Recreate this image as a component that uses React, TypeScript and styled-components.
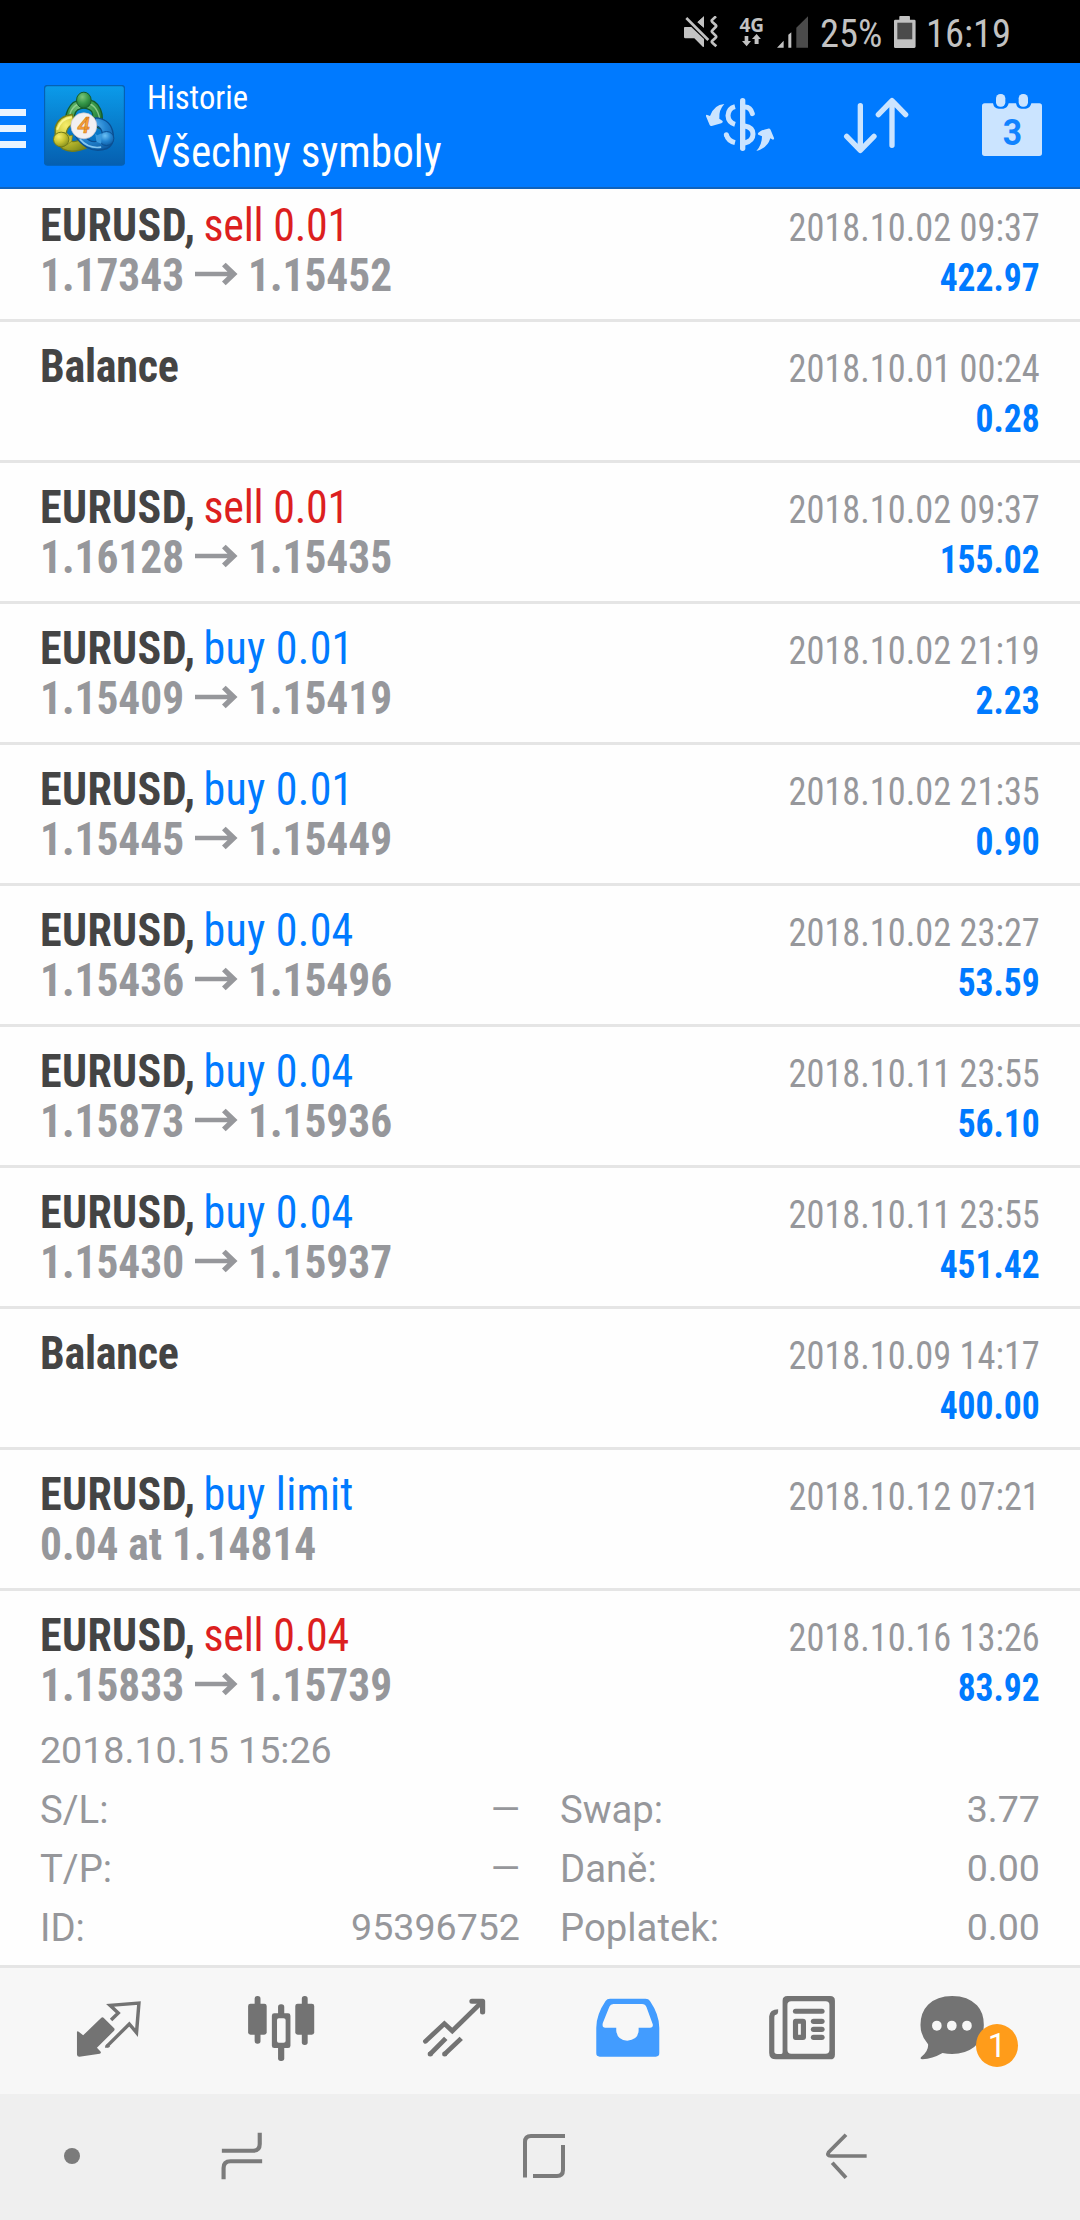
import React from "react";
import styled, { createGlobalStyle } from "styled-components";

const condensed = '"Roboto Condensed", Roboto, sans-serif';
const regular = "Roboto, sans-serif";

const GlobalStyle = createGlobalStyle`
  *, *::before, *::after { box-sizing: border-box; }
  body { margin: 0; background: #fff; }
  svg { display: block; flex: none; }
`;

const Screen = styled.div`
  display: flex;
  flex-direction: column;
  width: 1080px;
  height: 2220px;
  overflow: hidden;
  background: #fefefe;
  font-family: ${condensed};
`;

/* ---------- status bar ---------- */

const StatusBar = styled.div`
  display: flex;
  flex: none;
  align-items: center;
  justify-content: flex-end;
  height: 63px;
  padding-right: 69px;
  background: #000;
  color: #c2c2c2;
  gap: 12px;
`;

const StatusText = styled.span`
  font-size: 38.5px;
  line-height: 63px;
  padding-top: 3px;
`;

const NetworkBlock = styled.div`
  display: flex;
  flex-direction: column;
  align-items: center;
  width: 26px;
  margin-left: 9px;
`;

const NetworkLabel = styled.span`
  font: 700 19px/18px "Noto Sans", sans-serif;
`;

const BatterySlot = styled.div`
  margin-right: -2px;
`;

/* ---------- header ---------- */

const Header = styled.header`
  display: flex;
  flex: none;
  height: 126px;
  align-items: center;
  background: #007aff;
  border-bottom: 2px solid #0f63bd;
  color: #fff;
`;

const Burger = styled.div`
  display: flex;
  flex-direction: column;
  gap: 9px;
  width: 26px;
  margin: 6px 18px 0 0;
`;

const BurgerLine = styled.span`
  height: 7px;
  background: #e9f4ff;
`;

const Titles = styled.div`
  align-self: flex-start;
  flex: 1;
  padding: 9px 0 0 22px;
`;

const Subtitle = styled.div`
  font-size: 34px;
  line-height: 50px;
  transform: scaleX(0.96);
  transform-origin: left;
`;

const Title = styled.div`
  font-size: 44px;
  line-height: 60px;
  white-space: nowrap;
  transform: scaleX(0.981);
  transform-origin: left;
`;

const HeaderAction = styled.div`
  display: flex;
  flex: none;
  justify-content: center;
  width: 136px;
`;

/* ---------- history list ---------- */

const ListViewport = styled.main`
  flex: none;
  height: 1779px;
  overflow: hidden;
`;

const List = styled.div`
  margin-top: -8px;
`;

const Deal = styled.section<{ $open?: boolean }>`
  height: ${(p) => (p.$open ? 377 : 141)}px;
  border-bottom: 3px solid #e5e5e5;
  padding: 0 40px;
`;

const DealHead = styled.div`
  display: flex;
  justify-content: space-between;
  height: 119px;
`;

const DealMain = styled.div`
  padding-top: 19px;
`;

const DealSide = styled.div`
  padding-top: 22px;
  text-align: right;
`;

const DealTitle = styled.div`
  font-size: 46px;
  line-height: 50px;
  white-space: nowrap;
  color: #444;
  transform: scaleX(0.957);
  transform-origin: left;
`;

const Symbol = styled.b`
  font-weight: 700;
  letter-spacing: 0.35px;
  margin-right: -2.5px;
`;

const BalanceLabel = styled.b`
  font-weight: 700;
  letter-spacing: -0.25px;
`;

const Side = styled.span<{ $kind: "sell" | "buy" }>`
  color: ${(p) => (p.$kind === "sell" ? "#dc1f1f" : "#007aff")};
  letter-spacing: ${(p) => (p.$kind === "sell" ? -0.25 : 0.25)}px;
`;

const Prices = styled.div`
  display: flex;
  align-items: center;
  height: 50px;
  color: #96979b;
`;

const Price = styled.span<{ $width?: number }>`
  width: ${(p) => (p.$width ? p.$width + "px" : "auto")};
  font-size: 46px;
  font-weight: 700;
  line-height: 50px;
  white-space: nowrap;
  transform: scaleX(0.943);
  transform-origin: left;
`;

const ArrowSlot = styled.div`
  padding-bottom: 3px;
`;

const DealTime = styled.div`
  font-size: 38.3px;
  line-height: 50px;
  color: #96979b;
  transform: scaleX(0.949);
  transform-origin: right;
`;

const Profit = styled.div`
  font-size: 38.3px;
  font-weight: 700;
  line-height: 50px;
  color: #007aff;
  transform: scaleX(0.928);
  transform-origin: right;
`;

const Details = styled.div`
  display: grid;
  grid-template-columns: 1fr 1fr;
  column-gap: 40px;
  grid-auto-rows: 59px;
  margin-top: 11px;
  font-family: ${regular};
  font-size: 37.6px;
  line-height: 59px;
  color: #96979b;
`;

const OpenTime = styled.div`
  grid-column: 1 / -1;
`;

const Field = styled.div`
  display: flex;
  justify-content: space-between;
`;

const FieldLabel = styled.span`
  font-size: 38.3px;
`;

/* ---------- bottom bars ---------- */

const TabBar = styled.nav`
  display: flex;
  flex: none;
  align-items: center;
  height: 126px;
  padding-left: 22px;
  background: #f7f7f7;
`;

const Tab = styled.div`
  display: flex;
  flex: none;
  justify-content: center;
  width: 173px;
`;

const ChatTab = styled.div`
  position: relative;
  flex: none;
  margin-left: 30px;
`;

const Badge = styled.span`
  position: absolute;
  left: 59px;
  top: 29.5px;
  width: 42px;
  height: 43px;
  border-radius: 50%;
  background: #ff9c1a;
  color: #fff;
  font: 400 33px/43px Roboto, sans-serif;
  text-align: center;
`;

const SystemBar = styled.div`
  display: flex;
  flex: none;
  align-items: center;
  height: 126px;
  background: #efefef;
`;

const Dot = styled.span`
  width: 16px;
  height: 16px;
  margin: 0 10.5px 2px 64px;
  border-radius: 50%;
  background: #7b7b7b;
`;

const SystemKey = styled.div`
  display: flex;
  flex: none;
  justify-content: center;
  width: 302px;
`;

/* ---------- icons ---------- */

const HeaderIcon = ({ x, children }: { x: number; children: React.ReactNode }) => (
  <svg width="70" height="70" viewBox={`${x} 270 210 210`} fill="#cbe4ff" stroke="none">
    {children}
  </svg>
);

const TabIcon = ({ x, color = "#737373", children }: { x: number; color?: string; children: React.ReactNode }) => (
  <svg width="70" height="73.3" viewBox={`${x} 103 203.3 220`} preserveAspectRatio="none" fill={color} color={color}>
    {children}
  </svg>
);

const MuteIcon = () => (
  <svg width="34" height="32" viewBox="69 47 102 96" fill="#c2c2c2">
    <path d="M129 48V82L109 66ZM71 80h20l38 36v23l-3 1-26-26H73q-4 0-4-4V84q0-4 2-4z" />
    <path d="M76 53L143 120" fill="none" stroke="#000" strokeWidth="17" transform="translate(5 -5)" />
    <path d="M129 48V82L109 66Z" />
    <path d="M76 53L142 119" fill="none" stroke="#c2c2c2" strokeWidth="8" />
    <path d="M165 48l-12 11q-2 3 1 6l10 9q3 3 0 6l-10 10q-3 3 0 6l10 10q3 3 0 6l-10 9q-3 3 0 6l12 11" fill="none" stroke="#c2c2c2" strokeWidth="8" />
  </svg>
);

const DataArrows = () => (
  <svg width="18.6" height="12.3" viewBox="243 107 56 37" fill="#c2c2c2">
    <path d="M251 113h11v15h8l-13 16-14-16h8zM281 137h12v-15h7l-13-15-14 15h8z" />
  </svg>
);

const SignalIcon = () => (
  <svg width="31.3" height="32" viewBox="347 47 94 96">
    <path d="M367 121v21h-20zM381 103l9-7v46h-9z" fill="#c2c2c2" />
    <path d="M405 82l36-35v95h-36z" fill="#4b4b4b" />
  </svg>
);

const BatteryIcon = () => (
  <svg width="21.6" height="32" viewBox="698 47 65 96">
    <path d="M716 47h28q2 0 2 3v8h13q4 0 4 4v77q0 4-4 4h-57q-4 0-4-4V62q0-4 4-4h12v-8q0-3 2-3z" fill="#c2c2c2" />
    <path d="M708 67h45v50h-45z" fill="#4b4b4b" />
  </svg>
);

const Logo = () => (
  <svg width="81" height="81" viewBox="22.500 23.500 243 243">
    <defs>
      <linearGradient id="tile" x1="0" y1="0" x2="0" y2="1">
        <stop offset="0" stopColor="#0b9bea" />
        <stop offset="0.5" stopColor="#087dcc" />
        <stop offset="1" stopColor="#055fb0" />
      </linearGradient>
      <radialGradient id="green" cx="0.4" cy="0.3" r="0.8">
        <stop offset="0" stopColor="#7cc67a" />
        <stop offset="0.5" stopColor="#37994a" />
        <stop offset="1" stopColor="#17642a" />
      </radialGradient>
      <radialGradient id="yellow" cx="0.35" cy="0.3" r="0.8">
        <stop offset="0" stopColor="#f7ee6c" />
        <stop offset="0.5" stopColor="#c9c432" />
        <stop offset="1" stopColor="#7f8a1c" />
      </radialGradient>
      <radialGradient id="blue" cx="0.4" cy="0.3" r="0.8">
        <stop offset="0" stopColor="#6dc1f5" />
        <stop offset="0.5" stopColor="#2384d0" />
        <stop offset="1" stopColor="#0b559c" />
      </radialGradient>
    </defs>
    <rect x="24" y="25" width="240" height="239" rx="9" fill="url(#tile)" stroke="#0561b4" strokeWidth="4" />
    <path d="M94 150Q82 122 94 98Q108 68 142 66Q180 66 192 96Q204 124 190 154L164 140Q176 106 160 98Q142 88 124 98Q108 110 118 136Z" fill="url(#green)" stroke="#145c2d" strokeWidth="4" />
    <path d="M98 128Q100 82 142 76Q182 78 190 128" fill="none" stroke="#a9dca4" strokeWidth="4" opacity=".7" />
    <path d="M108 112Q66 116 56 152Q52 196 80 216Q108 230 150 212L136 184Q108 202 96 186Q84 170 94 154Q102 142 114 140Z" fill="url(#yellow)" stroke="#737d1a" strokeWidth="4" />
    <path d="M106 120Q72 124 62 158" fill="none" stroke="#fffba0" strokeWidth="6" opacity=".8" />
    <path d="M176 122Q218 124 228 160Q238 200 212 214Q178 226 150 210Q128 196 118 178L144 176Q160 198 184 192Q202 182 196 162Q190 146 176 146Z" fill="url(#blue)" stroke="#0b4f92" strokeWidth="4" />
    <path d="M130 186Q156 216 194 210" fill="none" stroke="#9fdcff" strokeWidth="5" opacity=".8" />
    <ellipse cx="142" cy="69" rx="22" ry="24" fill="url(#green)" stroke="#145c2d" strokeWidth="3" />
    <path d="M80 166q14 0 18 10l10-2-2 18q-14 14-26 14z" fill="#c4be34" stroke="#737d1a" strokeWidth="2" />
    <ellipse cx="74" cy="187" rx="23" ry="22" fill="url(#yellow)" stroke="#737d1a" strokeWidth="3" />
    <ellipse cx="210" cy="184" rx="22" ry="21" fill="url(#blue)" stroke="#0b4f92" strokeWidth="3" />
    <path d="M196 168l-14 6-6-4 4 24 14 6z" fill="#3b9ade" />
    <circle cx="142" cy="146" r="39" fill="#f1f0f2" stroke="#c5c3cc" strokeWidth="2" />
    <text x="142" y="169" textAnchor="middle" fontFamily="Roboto, sans-serif" fontWeight="500" fontStyle="italic" fontSize="68" fill="#f9a63a" stroke="#d67a1c" strokeWidth="2">4</text>
  </svg>
);

const CurrencyIcon = () => (
  <HeaderIcon x={135}>
    <rect x="240" y="294" width="16" height="159" rx="8" />
    <g fill="none" stroke="#cbe4ff" strokeWidth="15">
      <path d="M225 320Q205 325 204 347Q205 367 225 373" />
      <path d="M255 321Q272 321 277 341" strokeLinecap="round" />
      <path d="M254 378Q279 382 279 402Q279 423 254 429" />
      <path d="M199 404Q204 423 225 428" />
    </g>
    <circle cx="199" cy="404" r="7.500" />
    <path d="M193 312Q162 314 150 348L140 344Q137 345 138 349L149 375Q151 379 155 378L184 370Q190 367 188 363L178 356Q176 330 193 312z" />
    <path d="M289 453Q306 435 306 409L295 404Q292 402 295 398Q308 388 324 386Q330 385 332 390L342 414Q343 419 339 419L331 415Q322 445 289 453z" />
  </HeaderIcon>
);

const SortIcon = () => (
  <HeaderIcon x={543}>
    <g fill="none" stroke="#cbe4ff" strokeWidth="16" strokeLinecap="round" strokeLinejoin="round">
      <path d="M601 317V450M560 409L601 451L642 409" />
      <path d="M696 436V303M655 344L696 302L737 344" />
    </g>
  </HeaderIcon>
);

const CalendarIcon = () => (
  <HeaderIcon x={951}>
    <path d="M974 310H999Q1002 326 1016 326H1030Q1043 324 1046 310H1068Q1071 326 1084 326H1098Q1111 324 1114 310H1138Q1146 310 1146 318V460Q1146 468 1138 468H974Q966 468 966 460V318Q966 310 974 310z" />
    <rect x="1008" y="282" width="28" height="38" rx="13" />
    <rect x="1076" y="282" width="28" height="38" rx="13" />
    <text x="1057" y="434" textAnchor="middle" fontFamily="Roboto, sans-serif" fontWeight="700" fontSize="112" textLength="58" lengthAdjust="spacingAndGlyphs" fill="#1183ff">3</text>
  </HeaderIcon>
);

const PriceArrow = () => (
  <svg width="43" height="24" viewBox="0 0 43 24" fill="#96979b">
    <path d="M0 9.800H32.500L27 4.300L30.700 .700L42.500 12L30.700 23.300L27 19.600L32.500 14.200H0z" />
  </svg>
);

/* ---------- data ---------- */

type Item = {
  symbol?: string;
  side?: "sell" | "buy";
  label?: string;
  from?: string;
  to?: string;
  note?: string;
  time: string;
  profit?: string;
  open?: boolean;
};

const items: Item[] = [
  { symbol: "EURUSD", side: "sell", label: "sell 0.01", from: "1.17343", to: "1.15452", time: "2018.10.02 09:37", profit: "422.97" },
  { time: "2018.10.01 00:24", profit: "0.28" },
  { symbol: "EURUSD", side: "sell", label: "sell 0.01", from: "1.16128", to: "1.15435", time: "2018.10.02 09:37", profit: "155.02" },
  { symbol: "EURUSD", side: "buy", label: "buy 0.01", from: "1.15409", to: "1.15419", time: "2018.10.02 21:19", profit: "2.23" },
  { symbol: "EURUSD", side: "buy", label: "buy 0.01", from: "1.15445", to: "1.15449", time: "2018.10.02 21:35", profit: "0.90" },
  { symbol: "EURUSD", side: "buy", label: "buy 0.04", from: "1.15436", to: "1.15496", time: "2018.10.02 23:27", profit: "53.59" },
  { symbol: "EURUSD", side: "buy", label: "buy 0.04", from: "1.15873", to: "1.15936", time: "2018.10.11 23:55", profit: "56.10" },
  { symbol: "EURUSD", side: "buy", label: "buy 0.04", from: "1.15430", to: "1.15937", time: "2018.10.11 23:55", profit: "451.42" },
  { time: "2018.10.09 14:17", profit: "400.00" },
  { symbol: "EURUSD", side: "buy", label: "buy limit", note: "0.04 at 1.14814", time: "2018.10.12 07:21" },
  { symbol: "EURUSD", side: "sell", label: "sell 0.04", from: "1.15833", to: "1.15739", time: "2018.10.16 13:26", profit: "83.92", open: true },
];

const fields = [
  ["S/L:", "—"],
  ["Swap:", "3.77"],
  ["T/P:", "—"],
  ["Daně:", "0.00"],
  ["ID:", "95396752"],
  ["Poplatek:", "0.00"],
];

const DealRow = ({ item }: { item: Item }) => (
  <Deal $open={item.open}>
    <DealHead>
      <DealMain>
        <DealTitle>
          {item.symbol ? (
            <>
              <Symbol>{item.symbol}, </Symbol>
              <Side $kind={item.side!}>{item.label}</Side>
            </>
          ) : (
            <BalanceLabel>Balance</BalanceLabel>
          )}
        </DealTitle>
        {item.from && (
          <Prices>
            <Price $width={155}>{item.from}</Price>
            <ArrowSlot>
              <PriceArrow />
            </ArrowSlot>
            <Price>&nbsp;{item.to}</Price>
          </Prices>
        )}
        {item.note && (
          <Prices>
            <Price>{item.note}</Price>
          </Prices>
        )}
      </DealMain>
      <DealSide>
        <DealTime>{item.time}</DealTime>
        {item.profit && <Profit>{item.profit}</Profit>}
      </DealSide>
    </DealHead>
    {item.open && (
      <Details>
        <OpenTime>2018.10.15 15:26</OpenTime>
        {fields.map(([name, value]) => (
          <Field key={name}>
            <FieldLabel>{name}</FieldLabel>
            <span>{value}</span>
          </Field>
        ))}
      </Details>
    )}
  </Deal>
);

export default function App() {
  return (
    <Screen>
      <GlobalStyle />
      <StatusBar>
        <MuteIcon />
        <NetworkBlock>
          <NetworkLabel>4G</NetworkLabel>
          <DataArrows />
        </NetworkBlock>
        <SignalIcon />
        <StatusText>25%</StatusText>
        <BatterySlot>
          <BatteryIcon />
        </BatterySlot>
        <StatusText>16:19</StatusText>
      </StatusBar>

      <Header>
        <Burger>
          <BurgerLine />
          <BurgerLine />
          <BurgerLine />
        </Burger>
        <Logo />
        <Titles>
          <Subtitle>Historie</Subtitle>
          <Title>Všechny symboly</Title>
        </Titles>
        <HeaderAction><CurrencyIcon /></HeaderAction>
        <HeaderAction><SortIcon /></HeaderAction>
        <HeaderAction><CalendarIcon /></HeaderAction>
      </Header>

      <ListViewport>
        <List>
          {items.map((item, i) => (
            <DealRow key={i} item={item} />
          ))}
        </List>
      </ListViewport>

      <TabBar>
        <Tab>
          <TabIcon x={213.4}>
            <path d="M222 217Q223 212 228 217L240 227L292 175Q296 171 300 175L330 206Q333 210 329 214L280 264L291 276Q293 281 288 282L229 291Q223 291 222 285z" />
            <path d="M321 181L342 160L318 137L402 130L395 219L374 193L308 261" fill="none" stroke="currentColor" strokeWidth="10" />
            <path d="M303 262Q305 255 312 252L318 261Q314 265 304 264z" />
          </TabIcon>
        </Tab>
        <Tab>
          <TabIcon x={715.8}>
            <rect x="738" y="109" width="17" height="143" rx="8" />
            <rect x="719" y="132" width="54" height="93" rx="7" />
            <rect x="875" y="109" width="17" height="147" rx="8" />
            <rect x="856" y="132" width="55" height="93" rx="7" />
            <rect x="806" y="134" width="18" height="36" rx="8" />
            <rect x="806" y="255" width="18" height="49" rx="8" />
            <path fillRule="evenodd" d="M795 161h40q7 0 7 7v90q0 7-7 7h-40q-7 0-7-7v-90q0-7 7-7zM808 176q-5 0-5 5v63q0 5 5 5h14q6 0 6-5v-63q0-5-6-5z" />
          </TabIcon>
        </Tab>
        <Tab>
          <TabIcon x={1218.2}>
            <g fill="none" stroke="currentColor" strokeWidth="14" strokeLinecap="round">
              <path d="M1234 245L1289 192L1312 214L1396 129" />
              <path d="M1369 125H1400V157" strokeLinejoin="round" strokeWidth="15" />
            </g>
            <g fill="none" stroke="currentColor" strokeWidth="14">
              <path d="M1247 284L1293 236M1289 284L1338 236" />
            </g>
            <circle cx="1248" cy="283" r="7.500" />
            <circle cx="1290" cy="283" r="7.500" />
          </TabIcon>
        </Tab>
        <Tab>
          <TabIcon x={152.5} color="#429cff">
            <path fillRule="evenodd" d="M202 117H305Q314 117 318 124Q345 165 345 204V281Q345 291 335 291H172Q162 291 162 281V204Q162 165 189 124Q193 117 202 117zM212 133Q203 133 200 141L181 190Q178 204 188 204H220V213Q223 242 252 243Q283 241 285 213V204H318Q328 204 326 194L308 143Q304 133 295 133z" />
          </TabIcon>
        </Tab>
        <Tab>
          <TabIcon x={654.8}>
            <path fillRule="evenodd" d="M717 109H841Q855 109 855 123V285Q855 299 841 299H684Q664 299 664 279V170Q666 149 690 149V157Q689 165 684 165Q679 165 679 172V275Q679 283 687 283H699Q703 283 703 278V123Q703 109 717 109zM728 125Q717 125 717 136V271Q717 282 728 282H828Q839 282 839 271V136Q839 125 828 125z" />
            <rect x="733" y="147" width="92" height="15" rx="7.500" />
            <path fillRule="evenodd" d="M741 177h21q9 0 9 9v46q0 9-9 9h-21q-8 0-8-9v-46q0-9 8-9zM748 192v33h8v-33z" />
            <rect x="785" y="177" width="40" height="16" rx="8" />
            <rect x="785" y="201" width="40" height="16" rx="8" />
            <rect x="785" y="225" width="40" height="16" rx="8" />
          </TabIcon>
        </Tab>
        <ChatTab>
          <TabIcon x={1091.9}>
            <path d="M1194 109Q1240 109 1266 137Q1286 159 1286 196Q1286 236 1258 262Q1232 283 1194 283Q1180 283 1166 280Q1136 298 1108 299Q1099 298 1104 292Q1126 274 1124 254Q1102 228 1102 196Q1102 158 1124 135Q1150 109 1194 109z" />
            <g fill="#f7f7f7">
              <ellipse cx="1149.500" cy="198" rx="14" ry="15" />
              <ellipse cx="1193" cy="198" rx="14" ry="15" />
              <ellipse cx="1237" cy="198" rx="14" ry="15" />
            </g>
          </TabIcon>
          <Badge>1</Badge>
        </ChatTab>
      </TabBar>

      <SystemBar>
        <Dot />
        <SystemKey>
          <svg width="50" height="60" viewBox="628.900 501 145.200 180" preserveAspectRatio="none" fill="none" stroke="#7b7b7b" strokeWidth="12">
            <path d="M643 572H734Q753 572 753 552V518M648 658V624Q648 604 668 604H760" />
          </svg>
        </SystemKey>
        <SystemKey>
          <svg width="42" height="60" viewBox="0 -7 42 60" fill="none" stroke="#7b7b7b" strokeWidth="4">
            <path d="M2 43.500V8Q2 2 8 2H42M10 42H34Q40 42 40 36V11" />
          </svg>
        </SystemKey>
        <SystemKey>
          <svg width="50" height="60" viewBox="816.400 501 145.200 180" preserveAspectRatio="none" fill="none" stroke="#7b7b7b" strokeWidth="11">
            <path d="M889 524L839 576Q832 588 845 588H949M849 608L889 653" />
          </svg>
        </SystemKey>
      </SystemBar>
    </Screen>
  );
}
